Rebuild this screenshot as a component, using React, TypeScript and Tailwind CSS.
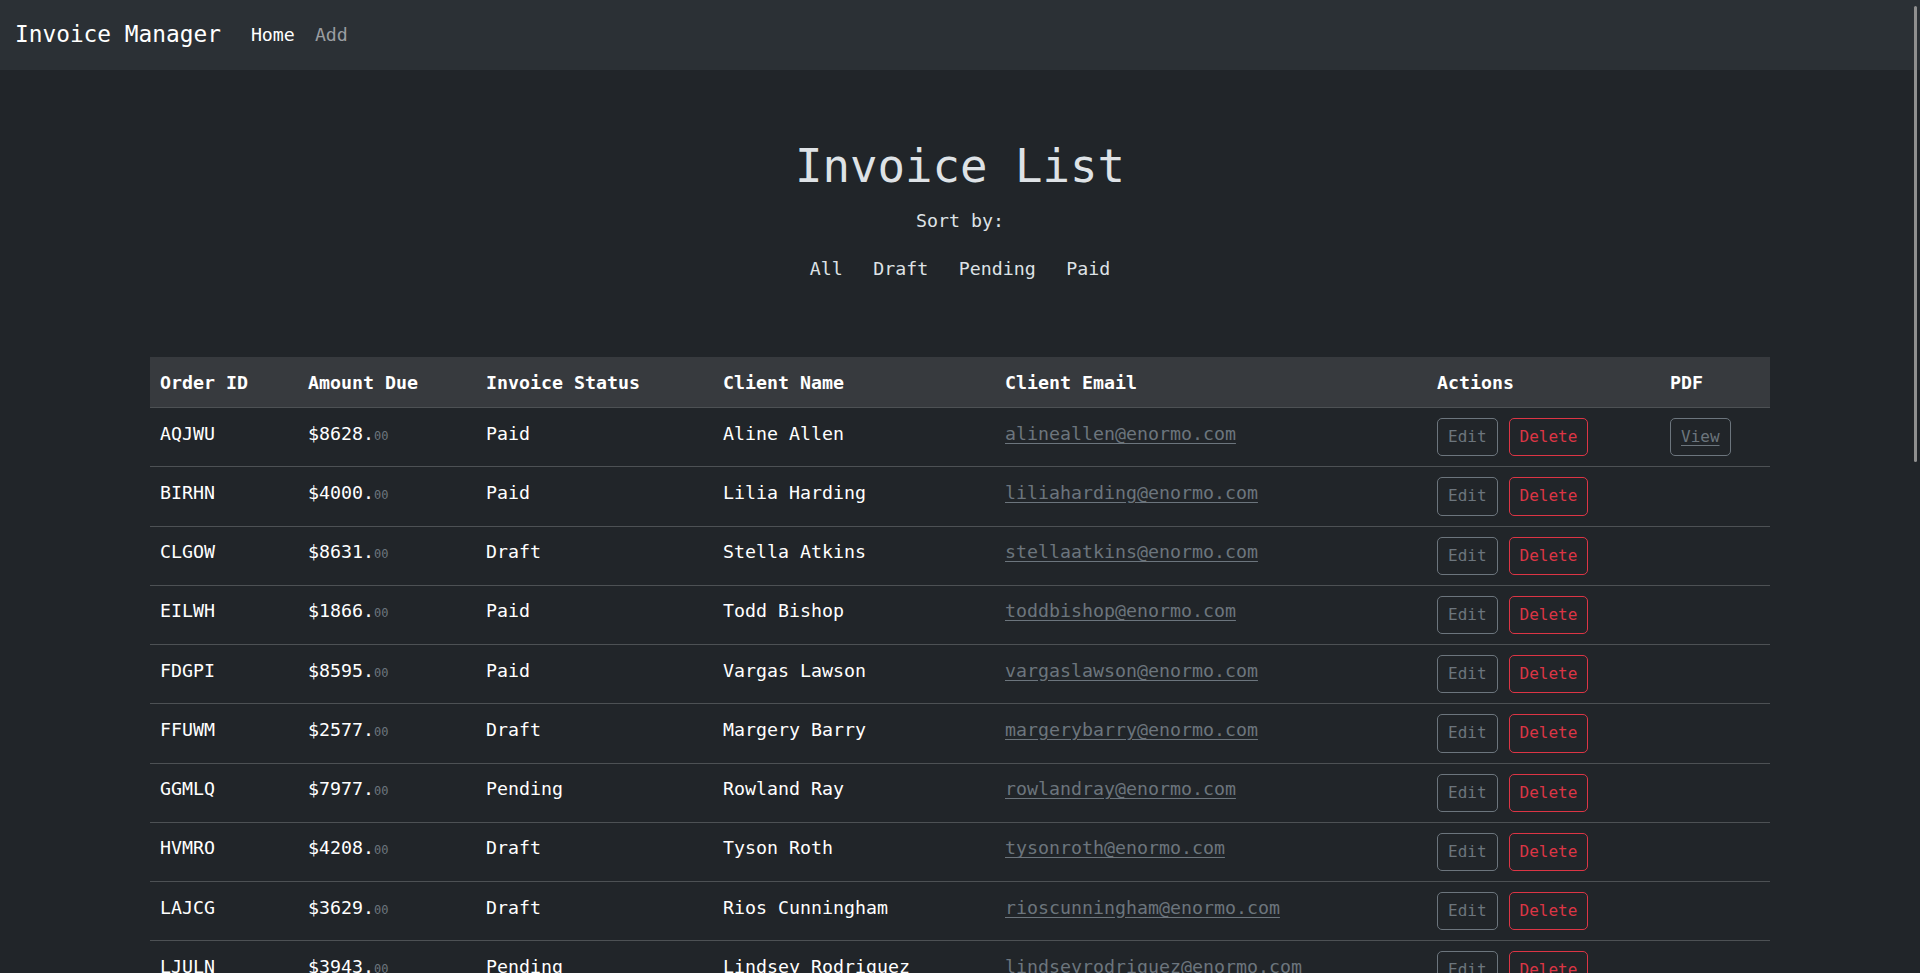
import React from 'react'

type Invoice = {
  id: string
  amount: number
  status: 'Paid' | 'Draft' | 'Pending'
  name: string
  email: string
  pdf?: boolean
}

const invoices: Invoice[] = [
  { id: 'AQJWU', amount: 8628, status: 'Paid', name: 'Aline Allen', email: 'alineallen@enormo.com', pdf: true },
  { id: 'BIRHN', amount: 4000, status: 'Paid', name: 'Lilia Harding', email: 'liliaharding@enormo.com' },
  { id: 'CLGOW', amount: 8631, status: 'Draft', name: 'Stella Atkins', email: 'stellaatkins@enormo.com' },
  { id: 'EILWH', amount: 1866, status: 'Paid', name: 'Todd Bishop', email: 'toddbishop@enormo.com' },
  { id: 'FDGPI', amount: 8595, status: 'Paid', name: 'Vargas Lawson', email: 'vargaslawson@enormo.com' },
  { id: 'FFUWM', amount: 2577, status: 'Draft', name: 'Margery Barry', email: 'margerybarry@enormo.com' },
  { id: 'GGMLQ', amount: 7977, status: 'Pending', name: 'Rowland Ray', email: 'rowlandray@enormo.com' },
  { id: 'HVMRO', amount: 4208, status: 'Draft', name: 'Tyson Roth', email: 'tysonroth@enormo.com' },
  { id: 'LAJCG', amount: 3629, status: 'Draft', name: 'Rios Cunningham', email: 'rioscunningham@enormo.com' },
  { id: 'LJULN', amount: 3943, status: 'Pending', name: 'Lindsey Rodriguez', email: 'lindseyrodriguez@enormo.com' },
  { id: 'MKQTE', amount: 5120, status: 'Paid', name: 'Hale Mcdonald', email: 'halemcdonald@enormo.com' },
]

const headers = ['Order ID', 'Amount Due', 'Invoice Status', 'Client Name', 'Client Email', 'Actions', 'PDF']
const colWidths = ['w-[148px]', 'w-[178px]', 'w-[237px]', 'w-[282px]', 'w-[432px]', 'w-[233px]', 'w-[110px]']

const textCell = 'pl-[10px] pr-[10px] pt-[10px] pb-[17px] align-middle leading-[30px]'
const btnBase =
  'h-[38.25px] px-[10px] border rounded-[5px] text-[16px] leading-[26.25px] bg-transparent'

export default function App() {
  return (
    <div className="relative h-[973px] overflow-hidden bg-[#212529] font-['DejaVu_Sans_Mono',monospace] text-[#dee2e6]">
      {/* Navbar */}
      <nav className="h-[70px] bg-[#2b3035] flex items-center px-[15px]">
        <span className="text-[22.8px] leading-[37.5px] text-white mr-[20px]">Invoice Manager</span>
        <a className="px-[10px] text-[18.27px] leading-[30px] text-white">Home</a>
        <a className="px-[10px] text-[18.27px] leading-[30px] text-[#9a9da1]">Add</a>
      </nav>

      <main className="flex flex-col items-center">
        <h1 className="mt-[67px] text-[45.7px] leading-[60px] font-normal">Invoice List</h1>
        <p className="mt-[9px] text-[18.27px] leading-[30px]">Sort by:</p>
        <div className="mt-[18px] flex gap-[30.5px] text-[18.27px] leading-[30px]">
          <a>All</a>
          <a>Draft</a>
          <a>Pending</a>
          <a>Paid</a>
        </div>

        <table className="mt-[73px] w-[1620px] table-fixed border-collapse text-[18.27px] text-white">
          <colgroup>
            {colWidths.map((w, i) => (
              <col key={i} className={w} />
            ))}
          </colgroup>
          <thead>
            <tr className="bg-[#373a3e] border-b border-[#4d5154]">
              {headers.map((h) => (
                <th key={h} className="px-[10px] pt-[11px] pb-[9px] text-left font-bold leading-[30px]">
                  {h}
                </th>
              ))}
            </tr>
          </thead>
          <tbody>
            {invoices.map((inv) => (
              <tr key={inv.id} className="border-b border-[#4d5154]">
                <td className={textCell}>{inv.id}</td>
                <td className={textCell}>
                  ${inv.amount}.<span className="text-[12px] leading-none text-[#6c757d]">00</span>
                </td>
                <td className={textCell}>{inv.status}</td>
                <td className={textCell}>{inv.name}</td>
                <td className={textCell}>
                  <a className="text-[#6c757d] underline underline-offset-[3px]">{inv.email}</a>
                </td>
                <td className="px-[10px] py-[10px] align-middle">
                  <div className="flex gap-[11px]">
                    <button className={`${btnBase} border-[#6c757d] text-[#6c757d]`}>Edit</button>
                    <button className={`${btnBase} border-[#dc3545] text-[#dc3545]`}>Delete</button>
                  </div>
                </td>
                <td className="px-[10px] py-[10px] align-middle">
                  {inv.pdf && (
                    <button className={`${btnBase} border-[#6c757d] text-[#6c757d]`}>
                      <span className="underline underline-offset-[3px]">View</span>
                    </button>
                  )}
                </td>
              </tr>
            ))}
          </tbody>
        </table>
      </main>

      {/* overlay scrollbar thumb */}
      <div className="absolute right-[3px] top-[6px] w-[3px] h-[456px] rounded-full bg-[#8f8f8f]" />
    </div>
  )
}
